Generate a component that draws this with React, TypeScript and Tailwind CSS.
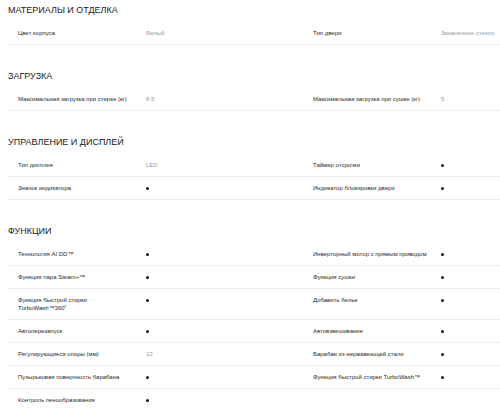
type Spec = { label: string; value?: string }

const sections: { title: string; rows: [Spec, Spec | null][] }[] = [
  {
    title: 'Материалы и отделка',
    rows: [[{ label: 'Цвет корпуса', value: 'Белый' }, { label: 'Тип двери', value: 'Закаленное стекло' }]],
  },
  {
    title: 'Загрузка',
    rows: [
      [
        { label: 'Максимальная загрузка при стирке (кг)', value: '8.5' },
        { label: 'Максимальная загрузка при сушке (кг)', value: '5' },
      ],
    ],
  },
  {
    title: 'Управление и дисплей',
    rows: [
      [{ label: 'Тип дисплея', value: 'LED' }, { label: 'Таймер отсрочки' }],
      [{ label: 'Значок индикатора' }, { label: 'Индикатор блокировки двери' }],
    ],
  },
  {
    title: 'Функции',
    rows: [
      [{ label: 'Технология AI DD™' }, { label: 'Инверторный мотор с прямым приводом' }],
      [{ label: 'Функция пара Steam+™' }, { label: 'Функция сушки' }],
      [{ label: 'Функция быстрой стирки TurboWash™360˚' }, { label: 'Добавить белье' }],
      [{ label: 'Автоперезапуск' }, { label: 'Автовзвешивание' }],
      [{ label: 'Регулирующиеся опоры (мм)', value: '10' }, { label: 'Барабан из нержавеющей стали' }],
      [{ label: 'Пузырьковая поверхность барабана' }, { label: 'Функция быстрой стирки TurboWash™' }],
      [{ label: 'Контроль пенообразования' }, null],
    ],
  },
]

function Cell({ spec }: { spec: Spec | null }) {
  if (!spec) return <div />
  return (
    <div className="flex border-b border-[#ececec] pl-[10px] py-[7px] text-[6px] leading-[8px]">
      <div className="w-[128px] shrink-0 pr-[14px] text-[#2a2a2a]">{spec.label}</div>
      <div className="flex-1">
        {spec.value ? (
          <span className="text-[#9a9a9a]">{spec.value}</span>
        ) : (
          <div className="mt-[2.5px] h-[3px] w-[3px] rounded-full bg-[#111]" />
        )}
      </div>
    </div>
  )
}

export default function App() {
  return (
    <div className="h-[408px] w-[500px] overflow-hidden bg-white pt-[3px] pl-[8px] font-['Liberation_Sans',Arial,sans-serif]">
      {sections.map((section, i) => (
        <section key={section.title} className={i > 0 ? 'mt-[24px]' : ''}>
          <h2 className="mb-[5px] h-[14px] text-[9px] leading-[14px] uppercase text-[#1a1a1a]">{section.title}</h2>
          <div className="grid w-[590px] grid-cols-[295px_295px]">
            {section.rows.map(([left, right], j) => (
              <div key={j} className="contents">
                <Cell spec={left} />
                <Cell spec={right} />
              </div>
            ))}
          </div>
        </section>
      ))}
    </div>
  )
}
